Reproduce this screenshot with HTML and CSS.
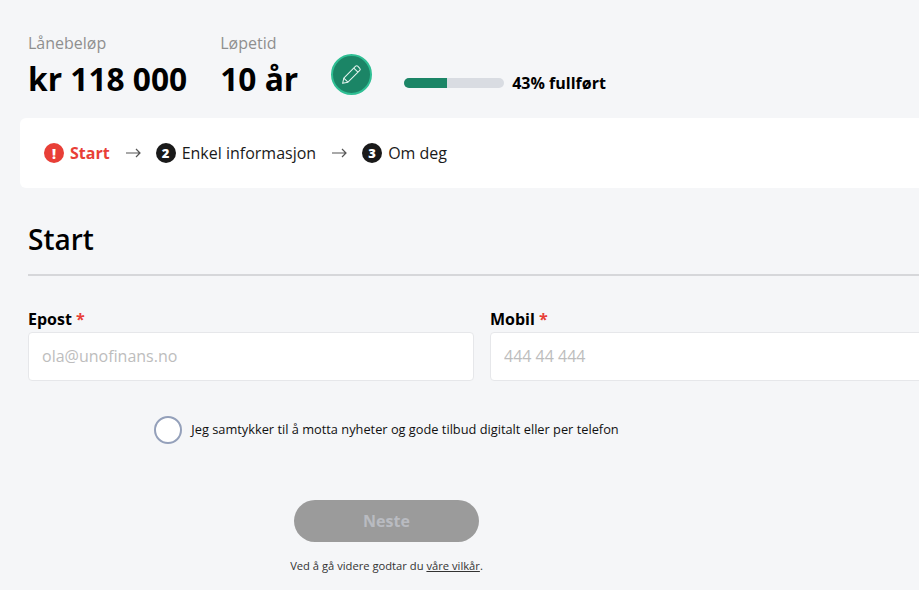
FILE: index.html
```html
<!DOCTYPE html>
<html lang="no">
<head>
    <meta charset="UTF-8">
    <meta name="viewport" content="width=device-width, initial-scale=1.0">
    <title>Start</title>
    <link rel="stylesheet" href="styles.css">
</head>
<body>
    <div class="page">
        <!-- loan summary -->
        <div class="summary">
            <div class="summary_item">
                <div class="summary_label">Lånebeløp</div>
                <div class="summary_value">kr 118 000</div>
            </div>
            <div class="summary_item">
                <div class="summary_label">Løpetid</div>
                <div class="summary_value">10 år</div>
            </div>
            <a href="javascript:;" class="edit_button" aria-label="Endre">
                <svg width="23" height="23" viewBox="0 0 20 20" fill="none" stroke="#e4f3ee" stroke-width="0.9" stroke-linejoin="round">
                    <path d="M2.3 17.7l1-4.6L13.6 2.8a1.3 1.3 0 0 1 1.8 0l1.8 1.8a1.3 1.3 0 0 1 0 1.8L6.9 16.7z"/>
                    <path d="M3.3 13.1l3.6 3.6M12 4.4l3.6 3.6"/>
                </svg>
            </a>
            <div class="progress">
                <div class="progress_track"><div class="progress_fill" style="width: 43%"></div></div>
                <span class="progress_text">43% fullført</span>
            </div>
        </div>

        <!-- steps -->
        <div class="steps">
            <div class="step step_error"><span class="step_icon step_icon_error">!</span>Start</div>
            <svg class="step_arrow" width="15" height="10" viewBox="0 0 15 10" fill="none" stroke="#555" stroke-width="1.2"><path d="M0 5h14M10 1l4 4-4 4"/></svg>
            <div class="step"><span class="step_icon">2</span>Enkel informasjon</div>
            <svg class="step_arrow" width="15" height="10" viewBox="0 0 15 10" fill="none" stroke="#555" stroke-width="1.2"><path d="M0 5h14M10 1l4 4-4 4"/></svg>
            <div class="step"><span class="step_icon">3</span>Om deg</div>
        </div>

        <!-- form -->
        <div class="form">
            <h1 class="form_title">Start</h1>
            <div class="fields">
                <div class="field">
                    <label class="field_label" for="epost">Epost <span class="required">*</span></label>
                    <input class="field_input" id="epost" type="text" placeholder="ola@unofinans.no">
                </div>
                <div class="field">
                    <label class="field_label" for="mobil">Mobil <span class="required">*</span></label>
                    <input class="field_input" id="mobil" type="text" placeholder="444 44 444">
                </div>
            </div>
            <div class="actions">
                <div class="consent">
                    <span class="consent_circle"></span>
                    <span class="consent_text">Jeg samtykker til å motta nyheter og gode tilbud digitalt eller per telefon</span>
                </div>
                <button class="next_button" type="button">Neste</button>
                <p class="terms">Ved å gå videre godtar du <a href="javascript:;">våre vilkår</a>.</p>
            </div>
        </div>
    </div>
</body>
</html>
```

FILE: styles.css
```css
*{
    box-sizing: border-box;
}
html, body{
    margin: 0;
    padding: 0;
    height: 100%;
    background-color: #f5f6f8;
    overflow: hidden;
}
body{
    font-family: "Open Sans", "Noto Sans", sans-serif;
    color: #000;
}
.page{
    width: 919px;
    height: 590px;
    overflow: hidden;
    padding-top: 33px;
}
.summary{
    display: flex;
    align-items: flex-start;
    padding-left: 28px;
    height: 85px;
}
.summary_item{
    margin-right: 33px;
}
.summary_label{
    font-size: 16px;
    line-height: 20px;
    color: #8f8f8f;
}
.summary_value{
    margin-top: 3px;
    font-size: 31.7px;
    line-height: 46px;
    font-weight: 700;
    white-space: nowrap;
}
.edit_button{
    display: flex;
    align-items: center;
    justify-content: center;
    width: 41px;
    height: 41px;
    margin-top: 21px;
    border: 2px solid #2fbf94;
    border-radius: 50%;
    background-color: #1b8566;
}
.progress{
    display: flex;
    align-items: center;
    margin: 38px 0 0 32px;
}
.progress_track{
    width: 100px;
    height: 10px;
    border-radius: 5px;
    background-color: #d9dce2;
    overflow: hidden;
}
.progress_fill{
    height: 100%;
    background-color: #1b8566;
}
.progress_text{
    margin-left: 8px;
    font-size: 16px;
    line-height: 24px;
    font-weight: 700;
    white-space: nowrap;
}
.steps{
    display: flex;
    align-items: center;
    width: 960px;
    height: 70px;
    margin-left: 20px;
    padding-left: 24px;
    border-radius: 6px;
    background-color: #fff;
}
.step{
    display: flex;
    align-items: center;
    font-size: 16px;
    color: #1a1a1a;
    white-space: nowrap;
}
.step_error{
    color: #e83f37;
    font-weight: 700;
}
.step_icon{
    display: flex;
    align-items: center;
    justify-content: center;
    width: 20px;
    height: 20px;
    margin-right: 6px;
    border-radius: 50%;
    background-color: #1a1a1a;
    color: #fff;
    font-size: 13px;
    font-weight: 800;
}
.step_icon_error{
    background-color: #e83f37;
    font-size: 14px;
}
.step_arrow{
    margin: 0 15px 0 16px;
    flex-shrink: 0;
}
.form{
    padding-left: 28px;
}
.form_title{
    margin: 0;
    height: 88px;
    padding-top: 32px;
    border-bottom: 2px solid #d6d7da;
    font-size: 28px;
    line-height: 38px;
    font-weight: 600;
}
.fields{
    display: flex;
    gap: 16px;
    margin-top: 32px;
}
.field{
    width: 446px;
    flex-shrink: 0;
}
.field_label{
    display: block;
    font-size: 16px;
    line-height: 22px;
    font-weight: 700;
}
.required{
    color: #e83f37;
}
.field_input{
    display: block;
    width: 100%;
    height: 49px;
    margin-top: 2px;
    padding: 0 13px 2px;
    border: 1px solid #e6e7ea;
    border-radius: 4px;
    background-color: #fff;
    font-family: inherit;
    font-size: 16px;
    outline: none;
}
.field_input::placeholder{
    color: #bdbdbd;
    opacity: 1;
}
.actions{
    display: flex;
    flex-direction: column;
    align-items: center;
    width: 717px;
}
.consent{
    display: flex;
    align-items: center;
    margin-top: 35px;
}
.consent_circle{
    width: 28px;
    height: 28px;
    margin-right: 9px;
    border: 2px solid #94a0ba;
    border-radius: 50%;
    background-color: #fff;
}
.consent_text{
    padding-bottom: 2px;
    font-size: 12.8px;
    line-height: 18px;
    color: #111;
    white-space: nowrap;
}
.next_button{
    width: 185px;
    height: 42px;
    margin-top: 56px;
    border: 0;
    border-radius: 21px;
    background-color: #9b9b9b;
    color: #b9bbc1;
    font-family: inherit;
    font-size: 16px;
    font-weight: 700;
}
.terms{
    margin: 15px 0 0;
    font-size: 11.2px;
    line-height: 18px;
    color: #333;
}
.terms a{
    color: #333;
}
```
